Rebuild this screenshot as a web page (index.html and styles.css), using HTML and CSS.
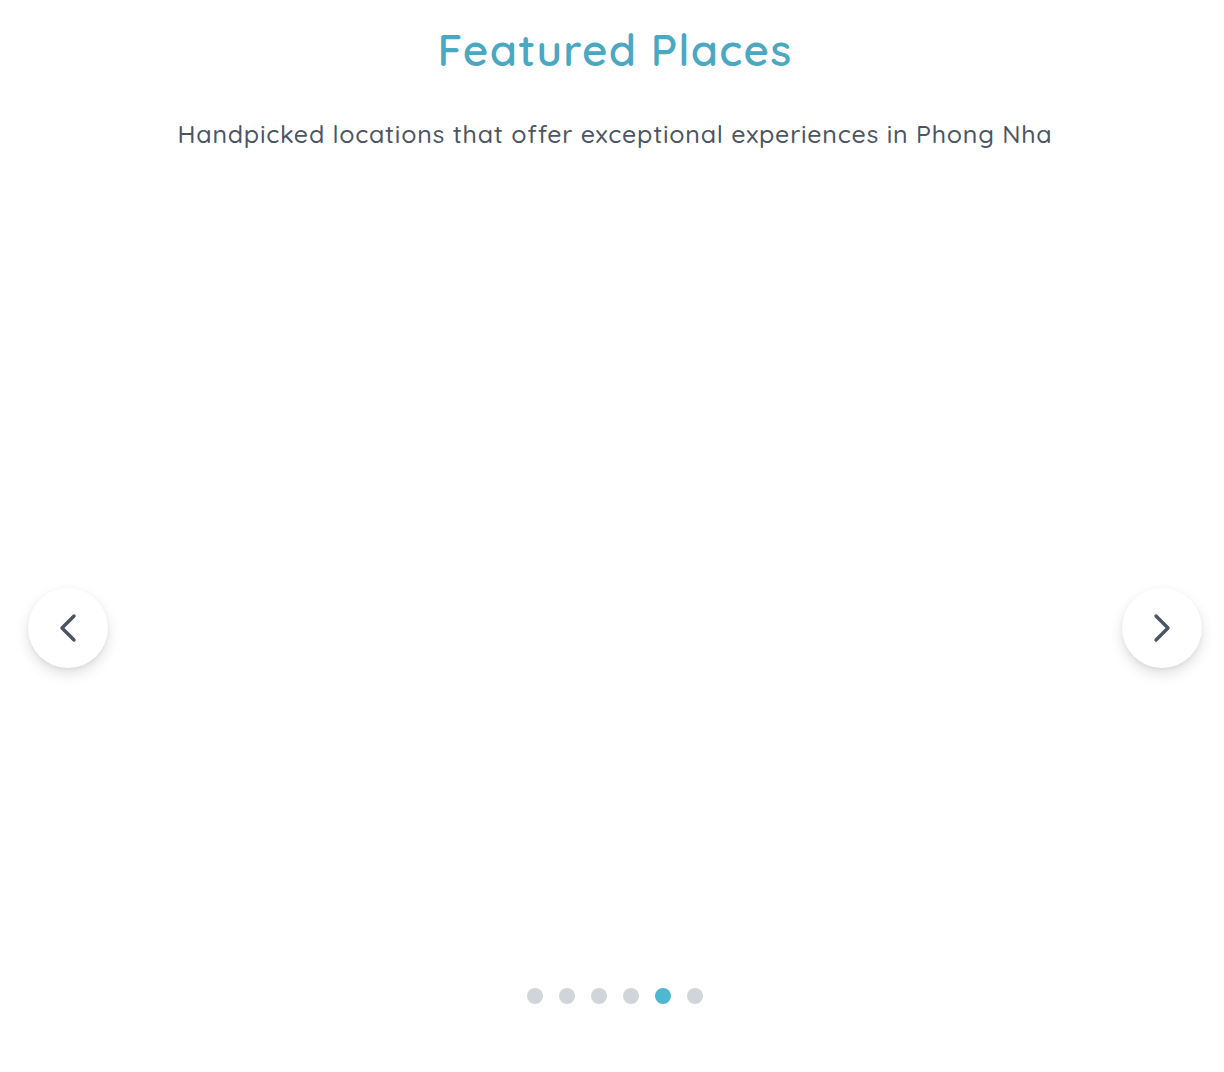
FILE: index.html
```html
<!DOCTYPE html>
<html lang="en">
<head>
<meta charset="utf-8">
<title>Featured Places</title>
<link rel="stylesheet" href="styles.css">
</head>
<body>
<section class="featured">
  <header class="featured-head">
    <h2 class="featured-title">Featured Places</h2>
    <p class="featured-sub">Handpicked locations that offer exceptional experiences in Phong Nha</p>
  </header>
  <div class="carousel">
    <div class="carousel-track"></div>
    <div class="carousel-dots">
      <span class="dot"></span>
      <span class="dot"></span>
      <span class="dot"></span>
      <span class="dot"></span>
      <span class="dot dot-active"></span>
      <span class="dot"></span>
    </div>
    <button class="nav-btn nav-prev" aria-label="Previous">
      <svg class="chev" width="20" height="32" viewBox="0 0 20 32" fill="none" stroke="currentColor" stroke-width="3.4" stroke-linecap="round" stroke-linejoin="round"><path d="M16 4L4 16l12 12"/></svg>
    </button>
    <button class="nav-btn nav-next" aria-label="Next">
      <svg class="chev" width="20" height="32" viewBox="0 0 20 32" fill="none" stroke="currentColor" stroke-width="3.4" stroke-linecap="round" stroke-linejoin="round"><path d="M4 4l12 12L4 28"/></svg>
    </button>
  </div>
</section>
</body>
</html>
```
FILE: styles.css
```css
html, body {
  margin: 0;
  padding: 0;
  background: #ffffff;
}
body {
  font-family: "Quicksand", "Noto Sans", "Open Sans", sans-serif;
}
.featured {
  padding-left: 6px;
  width: 1218px;
}
.featured-head {
  text-align: center;
  padding-top: 24px;
}
.featured-title {
  margin: 0;
  font-size: 44px;
  line-height: 52px;
  font-weight: 600;
  color: #4aa8c2;
  letter-spacing: 1.2px;
}
.featured-sub {
  margin: 42px 0 0;
  font-size: 25px;
  line-height: 32px;
  font-weight: 500;
  color: #4b5563;
  letter-spacing: 0.75px;
}
.carousel {
  position: relative;
  margin-top: 34px;
  height: 888px;
  display: flex;
  flex-direction: column;
}
.carousel-track {
  height: 804px;
}
.carousel-dots {
  display: flex;
  justify-content: center;
  gap: 16px;
}
.dot {
  width: 16px;
  height: 16px;
  border-radius: 50%;
  background: #d1d5db;
}
.dot-active {
  background: #4fb7cf;
}
.nav-btn {
  position: absolute;
  top: 50%;
  transform: translateY(-50%);
  width: 80px;
  height: 80px;
  border-radius: 50%;
  border: none;
  background: #ffffff;
  color: #4b5563;
  box-shadow: 0 6px 14px rgba(0, 0, 0, 0.12), 0 2px 4px rgba(0, 0, 0, 0.05);
  display: flex;
  align-items: center;
  justify-content: center;
  padding: 0;
  cursor: pointer;
}
.chev {
  display: block;
}
.nav-prev { left: 22px; }
.nav-next { right: 22px; }
```
